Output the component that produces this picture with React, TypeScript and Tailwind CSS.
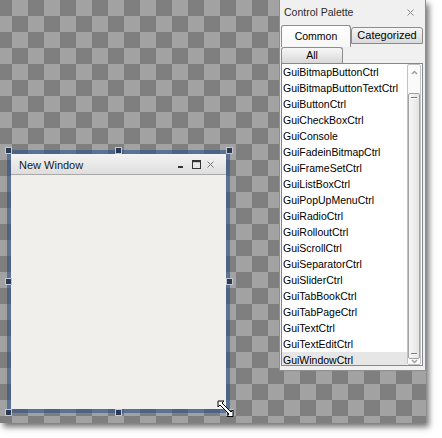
const controls = [
  "GuiBitmapButtonCtrl",
  "GuiBitmapButtonTextCtrl",
  "GuiButtonCtrl",
  "GuiCheckBoxCtrl",
  "GuiConsole",
  "GuiFadeinBitmapCtrl",
  "GuiFrameSetCtrl",
  "GuiListBoxCtrl",
  "GuiPopUpMenuCtrl",
  "GuiRadioCtrl",
  "GuiRolloutCtrl",
  "GuiScrollCtrl",
  "GuiSeparatorCtrl",
  "GuiSliderCtrl",
  "GuiTabBookCtrl",
  "GuiTabPageCtrl",
  "GuiTextCtrl",
  "GuiTextEditCtrl",
  "GuiWindowCtrl",
];

const handleClass =
  "absolute w-[7px] h-[7px] bg-[#2a3a54] border border-[#c3c9d2]";

function EditorWindow() {
  return (
    <div className="absolute left-[7px] top-[150px] w-[223px] h-[263px]">
      <div className="w-full h-full border-4 border-[rgba(40,80,140,0.58)] bg-[#f0efec] bg-clip-padding flex flex-col">
        <div className="h-[21px] flex items-center bg-linear-to-b from-[#f4f4f4] to-[#dedede] border-b border-[#a9a9a9]">
          <span className="pl-[8px] pt-[2px] text-[11px] leading-[20px] text-[#1a1a1a] flex-1">New Window</span>
          <div className="flex items-center pr-[12px] pt-[1px]">
            <svg width="7" height="9" viewBox="0 0 7 9" className="mr-[8px]">
              <rect x="1" y="6" width="5" height="2" fill="#333" />
            </svg>
            <svg width="9" height="9" viewBox="0 0 9 9" className="mr-[6px]">
              <rect x="0.5" y="0.5" width="8" height="8" fill="none" stroke="#333" />
              <rect x="0.5" y="1" width="8" height="1.2" fill="#333" />
            </svg>
            <svg width="7" height="7" viewBox="0 0 7 7">
              <path d="M0.5 0.5 L6.5 6.5 M6.5 0.5 L0.5 6.5" stroke="#777" strokeWidth="1" />
            </svg>
          </div>
        </div>
        <div className="flex-1" />
      </div>

      {/* selection handles */}
      <div className={`${handleClass} left-[-2px] top-[-3px]`} />
      <div className={`${handleClass} left-[108px] top-[-3px]`} />
      <div className={`${handleClass} left-[219px] top-[-3px]`} />
      <div className={`${handleClass} left-[-2px] top-[128px]`} />
      <div className={`${handleClass} left-[219px] top-[128px]`} />
      <div className={`${handleClass} left-[-2px] top-[259px]`} />
      <div className={`${handleClass} left-[108px] top-[259px]`} />
      <div className={`${handleClass} left-[219px] top-[259px]`} />
    </div>
  );
}

function ResizeCursor() {
  return (
    <svg width="18" height="18" viewBox="0 0 18 18" className="absolute left-[217px] top-[400px]">
      <path
        d="M1 1 H7 L5 3 L14 12 L16 10 V16.5 H10 L12 14 L3 5 L1 7 Z"
        fill="#fff"
        stroke="#000"
        strokeWidth="1"
        strokeLinejoin="miter"
      />
    </svg>
  );
}

function Chevron({ up }: { up?: boolean }) {
  return (
    <svg width="7" height="5" viewBox="0 0 7 5">
      <path
        d={up ? "M1 4 L3.5 1.5 L6 4" : "M1 1 L3.5 3.5 L6 1"}
        fill="none"
        stroke="#9c9c9c"
        strokeWidth="1.4"
      />
    </svg>
  );
}

function ControlPalette() {
  return (
    <div className="absolute left-[279px] top-0 w-[147px] h-[371px] bg-[#f0f0f0] border border-t-0 border-[#8e8e8e] flex flex-col pl-[1px] pr-[2px]">
      <div className="h-[25px] flex items-center justify-between pl-[3px] pr-[9px]">
        <span className="text-[10.5px] text-[#2a2a2a]">Control Palette</span>
        <svg width="7" height="7" viewBox="0 0 7 7">
          <path d="M0.5 0.5 L6.5 6.5 M6.5 0.5 L0.5 6.5" stroke="#8a8a8a" strokeWidth="1" />
        </svg>
      </div>

      <div className="h-[22px] flex items-start">
        <div className="w-[70px] h-[22px] flex items-center justify-center bg-linear-to-b from-white to-[#f6f6f6] border border-b-0 border-[#8c8c8c] rounded-t-[3px] text-[10.5px] text-black">
          Common
        </div>
        <div className="w-[72px] h-[17px] mt-[2px] flex items-center justify-center bg-linear-to-b from-[#f6f6f6] to-[#d9d9d9] border border-[#8c8c8c] rounded-t-[3px] text-[11px] text-black">
          Categorized
        </div>
      </div>

      <div className="h-[16px] flex">
        <div className="w-[62px] h-[16px] flex items-center justify-center bg-linear-to-b from-[#f7f7f7] to-[#d8d8d8] border border-b-0 border-[#8c8c8c] rounded-t-[3px] text-[10.5px] text-black">
          All
        </div>
      </div>

      <div className="h-[303px] bg-white border border-[#828790] flex">
        <ul className="flex-1 overflow-hidden">
          {controls.map((name) => (
            <li
              key={name}
              className={`h-[16px] leading-[16px] pl-[1px] text-[10.5px] text-black whitespace-nowrap ${
                name === "GuiWindowCtrl" ? "bg-[#e6e6e6]" : ""
              }`}
            >
              {name}
            </li>
          ))}
        </ul>
        <div className="w-[14px] mr-[1px] border border-[#c2c2c2] rounded-[2px] bg-[#fafafa] flex flex-col items-center">
          <div className="h-[15px] flex items-center justify-center">
            <Chevron up />
          </div>
          <div className="h-[13px]" />
          <div className="w-[12px] h-[266px] border border-[#a3a3a3] rounded-[2px] bg-linear-to-r from-[#f6f6f6] to-[#e4e4e4] flex flex-col items-center justify-between py-[3px]">
            <div className="w-[6px] h-[2px] border-t border-[#7a7a7a] bg-white" />
            <div className="w-[6px] h-[2px] border-t border-[#7a7a7a] bg-white" />
          </div>
          <div className="flex-1 flex items-center justify-center">
            <Chevron />
          </div>
        </div>
      </div>
    </div>
  );
}

export default function App() {
  return (
    <div className="w-[442px] h-[438px] bg-white font-['Liberation_Sans',Arial,sans-serif]">
      <div className="relative w-[426px] h-[423px] overflow-hidden bg-[conic-gradient(#a2a2a2_25%,#7f7f7f_0_50%,#a2a2a2_0_75%,#7f7f7f_0)] bg-[length:32px_32px] bg-[position:-4px_0] shadow-[3px_4px_6px_rgba(0,0,0,0.55)]">
        <EditorWindow />
        <ControlPalette />
        <ResizeCursor />
      </div>
    </div>
  );
}
